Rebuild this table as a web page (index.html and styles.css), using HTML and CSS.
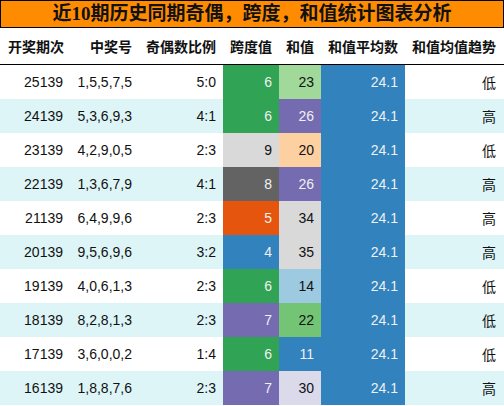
FILE: index.html
```html
<!DOCTYPE html>
<html lang="zh">
<head>
    <meta charset="UTF-8">
    <meta name="viewport" content="width=device-width, initial-scale=1.0">
    <title>近10期历史同期统计</title>
    <link rel="stylesheet" href="styles.css">
</head>
<body>
    <div class="title">近10期历史同期奇偶，跨度，和值统计图表分析</div>
    <table class="stats">
        <colgroup>
            <col style="width:70px">
            <col style="width:69px">
            <col style="width:84px">
            <col style="width:56px">
            <col style="width:42px">
            <col style="width:84px">
            <col style="width:99px">
        </colgroup>
        <thead>
            <tr>
                <th>开奖期次</th>
                <th>中奖号</th>
                <th>奇偶数比例</th>
                <th>跨度值</th>
                <th>和值</th>
                <th>和值平均数</th>
                <th>和值均值趋势</th>
            </tr>
        </thead>
        <tbody>
            <tr>
                <td>25139</td><td>1,5,5,7,5</td><td>5:0</td>
                <td class="c-green light">6</td><td class="c-lgreen">23</td>
                <td class="c-blue light">24.1</td><td>低</td>
            </tr>
            <tr>
                <td>24139</td><td>5,3,6,9,3</td><td>4:1</td>
                <td class="c-green light">6</td><td class="c-purple light">26</td>
                <td class="c-blue light">24.1</td><td>高</td>
            </tr>
            <tr>
                <td>23139</td><td>4,2,9,0,5</td><td>2:3</td>
                <td class="c-gray">9</td><td class="c-peach">20</td>
                <td class="c-blue light">24.1</td><td>低</td>
            </tr>
            <tr>
                <td>22139</td><td>1,3,6,7,9</td><td>4:1</td>
                <td class="c-dgray light">8</td><td class="c-purple light">26</td>
                <td class="c-blue light">24.1</td><td>高</td>
            </tr>
            <tr>
                <td>21139</td><td>6,4,9,9,6</td><td>2:3</td>
                <td class="c-orange light">5</td><td class="c-gray">34</td>
                <td class="c-blue light">24.1</td><td>高</td>
            </tr>
            <tr>
                <td>20139</td><td>9,5,6,9,6</td><td>3:2</td>
                <td class="c-blue light">4</td><td class="c-gray">35</td>
                <td class="c-blue light">24.1</td><td>高</td>
            </tr>
            <tr>
                <td>19139</td><td>4,0,6,1,3</td><td>2:3</td>
                <td class="c-green light">6</td><td class="c-lblue">14</td>
                <td class="c-blue light">24.1</td><td>低</td>
            </tr>
            <tr>
                <td>18139</td><td>8,2,8,1,3</td><td>2:3</td>
                <td class="c-purple light">7</td><td class="c-mgreen">22</td>
                <td class="c-blue light">24.1</td><td>低</td>
            </tr>
            <tr>
                <td>17139</td><td>3,6,0,0,2</td><td>1:4</td>
                <td class="c-green light">6</td><td class="c-blue light">11</td>
                <td class="c-blue light">24.1</td><td>低</td>
            </tr>
            <tr>
                <td>16139</td><td>1,8,8,7,6</td><td>2:3</td>
                <td class="c-purple light">7</td><td class="c-lavender">30</td>
                <td class="c-blue light">24.1</td><td>高</td>
            </tr>
        </tbody>
    </table>
</body>
</html>
```
FILE: styles.css
```css
body {
    margin: 0;
    padding: 0;
    background: #fff;
    font-family: "Liberation Sans", "Noto Sans CJK SC", sans-serif;
    color: #111;
}

.title {
    height: 26px;
    line-height: 26px;
    border: 1px solid #000;
    background-color: #ff8c00;
    text-align: center;
    font-family: "Liberation Serif", "Noto Sans CJK SC", serif;
    font-size: 19px;
    font-weight: bold;
    color: #111;
}

.stats {
    width: 504px;
    border-collapse: collapse;
    table-layout: fixed;
    font-size: 14px;
}

.stats th {
    height: 36px;
    padding: 0 7px 0 0;
    text-align: right;
    font-weight: bold;
    font-size: 14px;
    border-bottom: 1px solid #000;
    white-space: nowrap;
}

.stats th:first-child {
    text-align: left;
    padding-left: 8px;
}

.stats td {
    height: 34px;
    padding: 0 7px 0 0;
    text-align: right;
    white-space: nowrap;
}

.stats td:last-child,
.stats th:last-child {
    padding-right: 8px;
}

.stats tbody tr:nth-child(even) {
    background-color: #def5f8;
}

.light { color: #f0f0f0; }

.c-green { background-color: #31a354; }
.c-lgreen { background-color: #a1d99b; }
.c-mgreen { background-color: #74c476; }
.c-purple { background-color: #756bb1; }
.c-lavender { background-color: #dadaeb; }
.c-gray { background-color: #d9d9d9; }
.c-dgray { background-color: #636363; }
.c-peach { background-color: #fdd0a2; }
.c-orange { background-color: #e6550d; }
.c-blue { background-color: #3182bd; }
.c-lblue { background-color: #9ecae1; }
```
